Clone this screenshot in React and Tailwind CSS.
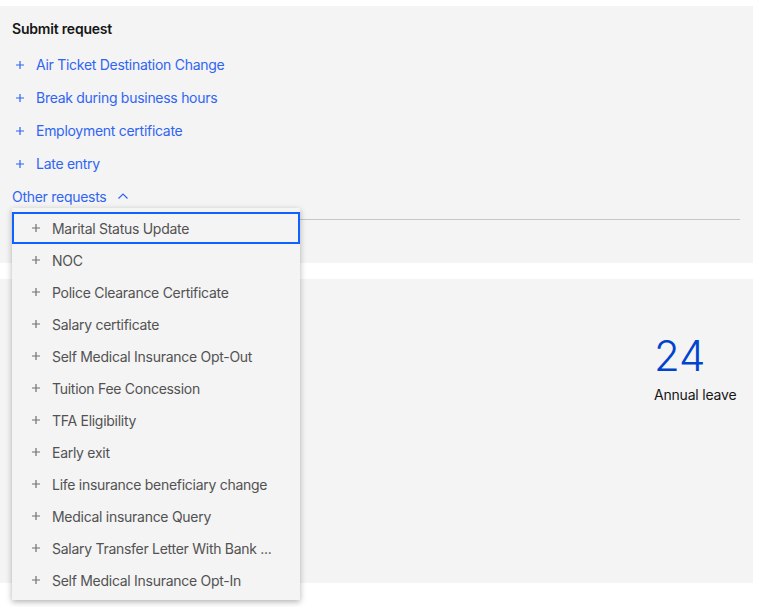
import React from "react";

const Plus = ({ className }) => (
  <svg viewBox="0 0 8 8" width="8" height="8" className={className} fill="none" stroke="currentColor" strokeWidth="1.2">
    <path d="M4 0v8M0 4h8" />
  </svg>
);

const ChevronUp = () => (
  <svg viewBox="0 0 10 6" width="10" height="6" fill="none" stroke="currentColor" strokeWidth="1.2">
    <path d="M0.5 5.5L5 1l4.5 4.5" />
  </svg>
);

const links = [
  "Air Ticket Destination Change",
  "Break during business hours",
  "Employment certificate",
  "Late entry",
];

const menu = [
  "Marital Status Update",
  "NOC",
  "Police Clearance Certificate",
  "Salary certificate",
  "Self Medical Insurance Opt-Out",
  "Tuition Fee Concession",
  "TFA Eligibility",
  "Early exit",
  "Life insurance beneficiary change",
  "Medical insurance Query",
  "Salary Transfer Letter With Bank ...",
  "Self Medical Insurance Opt-In",
];

export default function App() {
  return (
    <div
      className="w-[758px] h-[607px] bg-white pt-[6px] overflow-hidden"
      style={{ fontFamily: "Inter, 'Noto Sans', sans-serif" }}
    >
      <div className="relative w-[753px] h-[257px] bg-[#f4f4f4] px-3 pt-3">
        <div className="h-5 flex items-center text-[14px] font-semibold tracking-[-0.2px] text-[#161616]">
          Submit request
        </div>
        <div className="mt-[10px] flex flex-col">
          {links.map((l) => (
            <div key={l} className="h-[33px] flex items-center text-[14px] tracking-[-0.28px] text-[#3065f2]">
              <Plus className="ml-1 mr-[12px]" />
              <span>{l}</span>
            </div>
          ))}
          <div className="h-[33px] flex items-center text-[14px] tracking-[-0.28px] text-[#3065f2]">
            <span>Other requests</span>
            <span className="ml-[12px] mb-[2px] flex">
              <ChevronUp />
            </span>
          </div>
        </div>
        <div className="mt-[6px] mr-[1px] h-px bg-[#c6c6c6]" />

        <div className="absolute left-3 top-[202px] z-10 w-[288px] bg-[#f4f4f4] py-1 shadow-[0_2px_6px_rgba(0,0,0,0.3)]">
          {menu.map((m, i) => (
            <div
              key={m}
              className={
                "h-8 flex items-center text-[14px] tracking-[-0.28px] text-[#525252] pl-5 pr-4 " +
                (i === 0 ? "outline-2 outline-[#0f62fe] -outline-offset-2" : "")
              }
            >
              <Plus className="shrink-0 mr-[12px] text-[#6f6f6f]" />
              <span className="whitespace-nowrap">{m}</span>
            </div>
          ))}
        </div>
      </div>

      <div className="mt-4 w-[753px] h-[304px] bg-[#f4f4f4] flex justify-end">
        <div className="w-[99px] pt-[53px]">
          <div className="text-[42px] leading-[48px] font-light text-[#0043ce]">24</div>
          <div className="mt-[6px] text-[14px] leading-[18px] tracking-[-0.2px] text-[#161616]">Annual leave</div>
        </div>
      </div>
    </div>
  );
}
